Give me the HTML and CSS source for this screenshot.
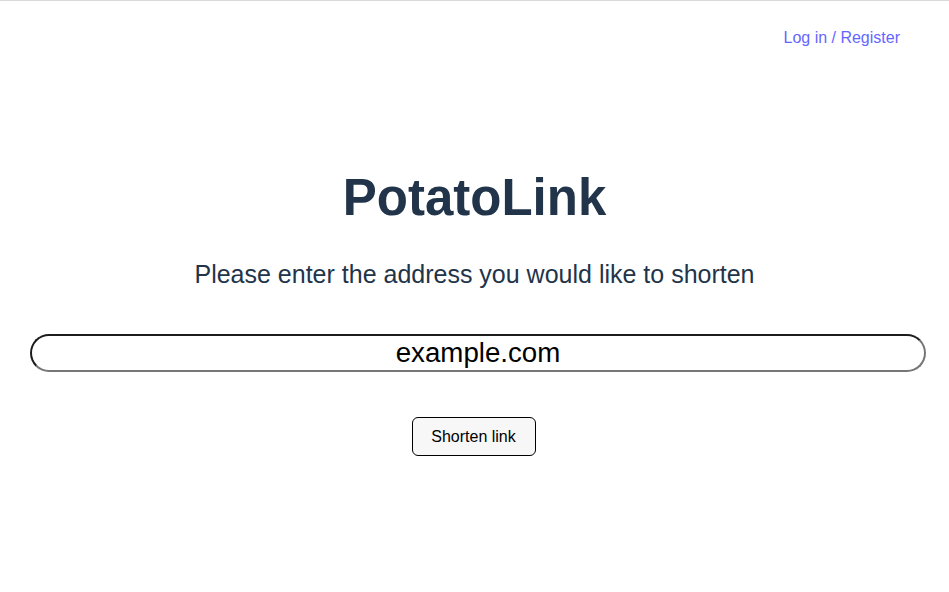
FILE: index.html
```html
<!DOCTYPE html>
<html lang="en">
<head>
<meta charset="utf-8">
<title>PotatoLink</title>
<link rel="stylesheet" href="styles.css">
</head>
<body>
<header class="topbar">
  <a class="auth-link" href="#">Log in / Register</a>
</header>
<main class="main">
  <h1 class="title">PotatoLink</h1>
  <p class="subtitle">Please enter the address you would like to shorten</p>
  <form class="form">
    <div class="input-wrap">
      <input class="url-input" type="text" value="example.com">
    </div>
    <button class="submit" type="button">Shorten link</button>
  </form>
</main>
</body>
</html>
```

FILE: styles.css
```css
html, body {
  margin: 0;
  padding: 0;
  background: #fff;
}
body {
  font-family: "Liberation Sans", Arial, sans-serif;
  border-top: 1px solid #d9d9d9;
  height: 591px;
}
.topbar {
  display: flex;
  justify-content: flex-end;
  padding: 28px 49px 0 0;
  height: 25px;
}
.auth-link {
  color: #6666ff;
  text-decoration: none;
  font-size: 16px;
  line-height: 18px;
}
.main {
  display: flex;
  flex-direction: column;
  align-items: center;
}
.title {
  margin: 115px 0 0;
  font-size: 51px;
  line-height: 58px;
  font-weight: bold;
  color: #22344a;
}
.subtitle {
  margin: 32px 0 0;
  font-size: 25px;
  line-height: 30px;
  color: #22344a;
}
.form {
  width: 100%;
  display: flex;
  flex-direction: column;
  align-items: center;
  margin-top: 45px;
}
.input-wrap {
  box-sizing: border-box;
  width: 100%;
  padding: 0 23px 0 30px;
}
.url-input {
  box-sizing: border-box;
  width: 100%;
  height: 38px;
  border: 2px solid #767676;
  border-top-color: #1c1c1c;
  border-left-color: #1c1c1c;
  border-radius: 19px;
  font-family: "Liberation Sans", Arial, sans-serif;
  font-size: 27.7px;
  text-align: center;
  color: #000;
  padding: 0;
  outline: none;
  display: block;
}
.submit {
  margin: 45px 2px 0 0;
  box-sizing: border-box;
  width: 124px;
  height: 39px;
  background: #f7f7f7;
  border: 1px solid #000;
  border-radius: 6px;
  font-family: "Liberation Sans", Arial, sans-serif;
  font-size: 16px;
  color: #000;
  padding: 0;
}
```
